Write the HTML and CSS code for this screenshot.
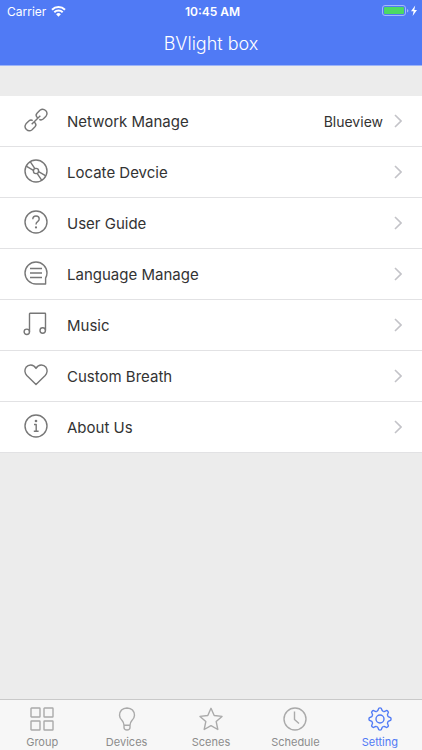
FILE: index.html
```html
<!DOCTYPE html>
<html lang="en">
<head>
<meta charset="UTF-8">
<meta name="viewport" content="width=device-width, initial-scale=1.0">
<link rel="stylesheet" href="styles.css">
<title>BVlight box</title>
</head>

<body>

  <header class="header">
    <div class="status">
      <div class="status-left">
        <span>Carrier</span>
        <svg class="wifi" viewBox="0 0 15 11">
          <path d="M1 3.7a9.3 9.3 0 0 1 13 0M3.3 6.3a6 6 0 0 1 8.4 0" fill="none" stroke="#fff" stroke-width="2"/>
          <path d="M7.5 10.8 5.1 8.3a3.3 3.3 0 0 1 4.8 0z" fill="#fff"/>
        </svg>
      </div>
      <span class="time">10:45 AM</span>
      <div class="status-right">
        <svg class="battery" viewBox="0 0 36 12">
          <rect x="0.5" y="0.5" width="23" height="10" rx="2.5" fill="none" stroke="#a3b9fa"/>
          <rect x="2" y="2" width="20" height="7" rx="1" fill="#4cd964"/>
          <path d="M25 4v3.4q1.4-.5 1.4-1.7T25 4z" fill="#a3b9fa"/>
          <path d="M33.2.6 29 6.3h2.6l-1 4.6 4.4-6h-2.7z" fill="#fff"/>
        </svg>
      </div>
    </div>
    <h1 class="title">BVlight box</h1>
  </header>

  <main class="main">
    <ul class="list">
      <li>
        <a class="row" href="#network">
          <svg class="icon" viewBox="0 0 24 24">
            <path d="M13.8 9.9 12.9 9q-1.7-1.9.1-3.8l2.9-2.9q3-2.2 5.7.3 2.6 2.6.4 5.6l-2.8 2.8q-2 1.7-3.9.4"/>
            <path d="M10.2 14.1l.9.9q1.7 1.9-.1 3.8l-2.9 2.9q-3 2.2-5.7-.3-2.6-2.6-.4-5.6l2.8-2.8q2-1.7 3.9-.4"/>
            <path d="M7.7 16.3l8.6-8.6"/>
          </svg>
          <span class="label">Network Manage</span>
          <span class="value">Blueview</span>
          <svg class="arrow" viewBox="0 0 8 14"><path d="M1 1l6 6-6 6"/></svg>
        </a>
      </li>
      <li>
        <a class="row" href="#locate">
          <svg class="icon" viewBox="0 0 24 24">
            <circle cx="12" cy="12" r="11"/>
            <circle cx="12" cy="12" r="2.6"/>
            <path d="M10.9 9.6 6.2 2.6M9.4 11.4 2.2 7.2"/>
            <path d="M13.1 14.4l4.7 7M14.6 12.6l7.2 4.2"/>
          </svg>
          <span class="label">Locate Devcie</span>
          <svg class="arrow" viewBox="0 0 8 14"><path d="M1 1l6 6-6 6"/></svg>
        </a>
      </li>
      <li>
        <a class="row" href="#guide">
          <svg class="icon" viewBox="0 0 24 24">
            <circle cx="12" cy="12" r="11"/>
            <path d="M8.8 9.2q0-3.2 3.2-3.2t3.2 2.9q0 1.5-1.6 2.7-1.6 1.1-1.6 2.9"/>
            <circle class="dot" cx="12" cy="17.4" r="1.1"/>
          </svg>
          <span class="label">User Guide</span>
          <svg class="arrow" viewBox="0 0 8 14"><path d="M1 1l6 6-6 6"/></svg>
        </a>
      </li>
      <li>
        <a class="row" href="#language">
          <svg class="icon" viewBox="0 0 24 24">
            <path d="M12 23A11 11 0 1 1 23 12q0 2.6-1.4 5.2V23z"/>
            <path d="M6 7.5h12M6 12h12M6 16.5h12"/>
          </svg>
          <span class="label">Language Manage</span>
          <svg class="arrow" viewBox="0 0 8 14"><path d="M1 1l6 6-6 6"/></svg>
        </a>
      </li>
      <li>
        <a class="row" href="#music">
          <svg class="icon" viewBox="0 0 24 24">
            <circle cx="2.8" cy="19.8" r="2.7"/>
            <circle cx="18.7" cy="18.5" r="2.7"/>
            <path d="M5.5 19.8V1.8q0-.5.5-.5h15q.5 0 .5.5v16.700"/>
          </svg>
          <span class="label">Music</span>
          <svg class="arrow" viewBox="0 0 8 14"><path d="M1 1l6 6-6 6"/></svg>
        </a>
      </li>
      <li>
        <a class="row" href="#breath">
          <svg class="icon" viewBox="0 0 24 24">
            <path d="M12 5.4Q10 2 6.7 2 3.8 2 2 4.3.8 6 .9 8.3q.2 2.3 1.9 4.1L12 21.6l9.2-9.2q1.7-1.8 1.9-4.1.1-2.3-1.1-4Q20.2 2 17.3 2 14 2 12 5.4z"/>
          </svg>
          <span class="label">Custom Breath</span>
          <svg class="arrow" viewBox="0 0 8 14"><path d="M1 1l6 6-6 6"/></svg>
        </a>
      </li>
      <li>
        <a class="row" href="#about">
          <svg class="icon" viewBox="0 0 24 24">
            <circle cx="12" cy="12" r="11"/>
            <path d="M10 10.5h2.2v6.8M9.8 17.3h4.8"/>
            <circle class="dot" cx="12" cy="7" r="1.3"/>
          </svg>
          <span class="label">About Us</span>
          <svg class="arrow" viewBox="0 0 8 14"><path d="M1 1l6 6-6 6"/></svg>
        </a>
      </li>
    </ul>
  </main>

  <nav class="tabs">
    <a class="tab" href="#group">
      <svg class="icon" viewBox="0 0 24 24">
        <rect x="1" y="1" width="9" height="9" rx="0.5"/>
        <rect x="14" y="1" width="9" height="9" rx="0.5"/>
        <rect x="1" y="14" width="9" height="9" rx="0.5"/>
        <rect x="14" y="14" width="9" height="9" rx="0.5"/>
      </svg>
      <span>Group</span>
    </a>
    <a class="tab" href="#devices">
      <svg class="icon" viewBox="0 0 24 24">
        <path d="M9 18.2q0-2.5-1.9-4.7Q4.5 11 4.5 8.3 4.8 1.4 12 1q7.2.4 7.5 7.3 0 2.7-2.6 5.2-1.9 2.2-1.9 4.7zM9 18.2v2.3q.2 2.5 3 2.5t3-2.5v-2.3"/>
      </svg>
      <span>Devices</span>
    </a>
    <a class="tab" href="#scenes">
      <svg class="icon" viewBox="0 0 24 24">
        <path d="M12 1.3l3.2 7.2 7.8.9-5.8 5.2 1.6 7.9-6.8-3.9-6.8 3.9 1.6-7.9L1 9.400l7.800-.9z"/>
      </svg>
      <span>Scenes</span>
    </a>
    <a class="tab" href="#schedule">
      <svg class="icon" viewBox="0 0 24 24">
        <circle cx="12" cy="12" r="11"/>
        <path d="M11.5 4.5v8l4.5 4"/>
      </svg>
      <span>Schedule</span>
    </a>
    <a class="tab active" href="#setting">
      <svg class="icon" viewBox="0 0 24 24">
        <defs>
          <path id="tooth" d="M8.8 4.3q1.3-.4 1.5-1.9Q10.5.9 12 .9t1.7 1.5q.2 1.5 1.5 1.9"/>
        </defs>
        <use href="#tooth"/>
        <use href="#tooth" transform="rotate(45 12 12)"/>
        <use href="#tooth" transform="rotate(90 12 12)"/>
        <use href="#tooth" transform="rotate(135 12 12)"/>
        <use href="#tooth" transform="rotate(180 12 12)"/>
        <use href="#tooth" transform="rotate(225 12 12)"/>
        <use href="#tooth" transform="rotate(270 12 12)"/>
        <use href="#tooth" transform="rotate(315 12 12)"/>
        <circle cx="12" cy="12" r="4"/>
      </svg>
      <span>Setting</span>
    </a>
  </nav>

</body>
</html>
```

FILE: styles.css
```css
* {
  box-sizing: border-box;
}

body {
  margin: 0;
  min-height: 100vh;
  display: flex;
  flex-direction: column;
  background-color: #ececec;
  color: #333;
  font-family: Inter, "Liberation Sans", sans-serif;
}

a {
  color: inherit;
  text-decoration: none;
}

/* header */
.header {
  background-color: #507af5;
  border-bottom: 1px solid #9db4f7;
  color: white;
}

.status {
  display: grid;
  grid-template-columns: 1fr auto 1fr;
  align-items: center;
  height: 22px;
  padding: 0 4px 0 7px;
  font-size: 12px;
}

.status-left {
  display: flex;
  align-items: center;
  gap: 5px;
}

.status-right {
  display: flex;
  justify-content: flex-end;
}

.wifi {
  width: 15px;
  height: 11px;
}

.battery {
  width: 36px;
  height: 12px;
}

.time {
  font-weight: 600;
}

.title {
  margin: 0;
  line-height: 43px;
  font-size: 18px;
  font-weight: 300;
  text-align: center;
}

/* settings list */
.main {
  flex: 1;
  padding-top: 30px;
}

.list {
  margin: 0;
  padding: 0;
  list-style: none;
  background-color: white;
}

.row {
  display: flex;
  align-items: center;
  height: 51px;
  padding: 0 20px 0 24px;
  border-bottom: 1px solid #e2e2e4;
  font-size: 15px;
}

.icon {
  width: 24px;
  height: 24px;
  overflow: visible;
  fill: none;
  stroke: #777;
  stroke-width: 1.4;
  stroke-linejoin: round;
}

.row .icon {
  margin-bottom: 2px;
}

.dot {
  fill: #777;
  stroke: none;
}

.label {
  flex: 1;
  margin-left: 19px;
}

.value {
  font-size: 14px;
}

.arrow {
  width: 8px;
  height: 14px;
  margin-left: 11px;
  fill: none;
  stroke: #c3c3c8;
  stroke-width: 1.6;
}

/* bottom tabs */
.tabs {
  display: flex;
  height: 51px;
  border-top: 1px solid #c9c9c9;
  background-color: #f7f7f7;
}

.tab {
  flex: 1;
  display: flex;
  flex-direction: column;
  align-items: center;
  gap: 4px;
  padding-top: 7px;
  color: #8c8c8c;
  font-size: 11px;
  line-height: 14px;
}

.tab .icon {
  flex: none;
  stroke: #aaa;
}

.tab.active {
  color: #507af5;
}

.tab.active .icon {
  stroke: #507af5;
}
```
